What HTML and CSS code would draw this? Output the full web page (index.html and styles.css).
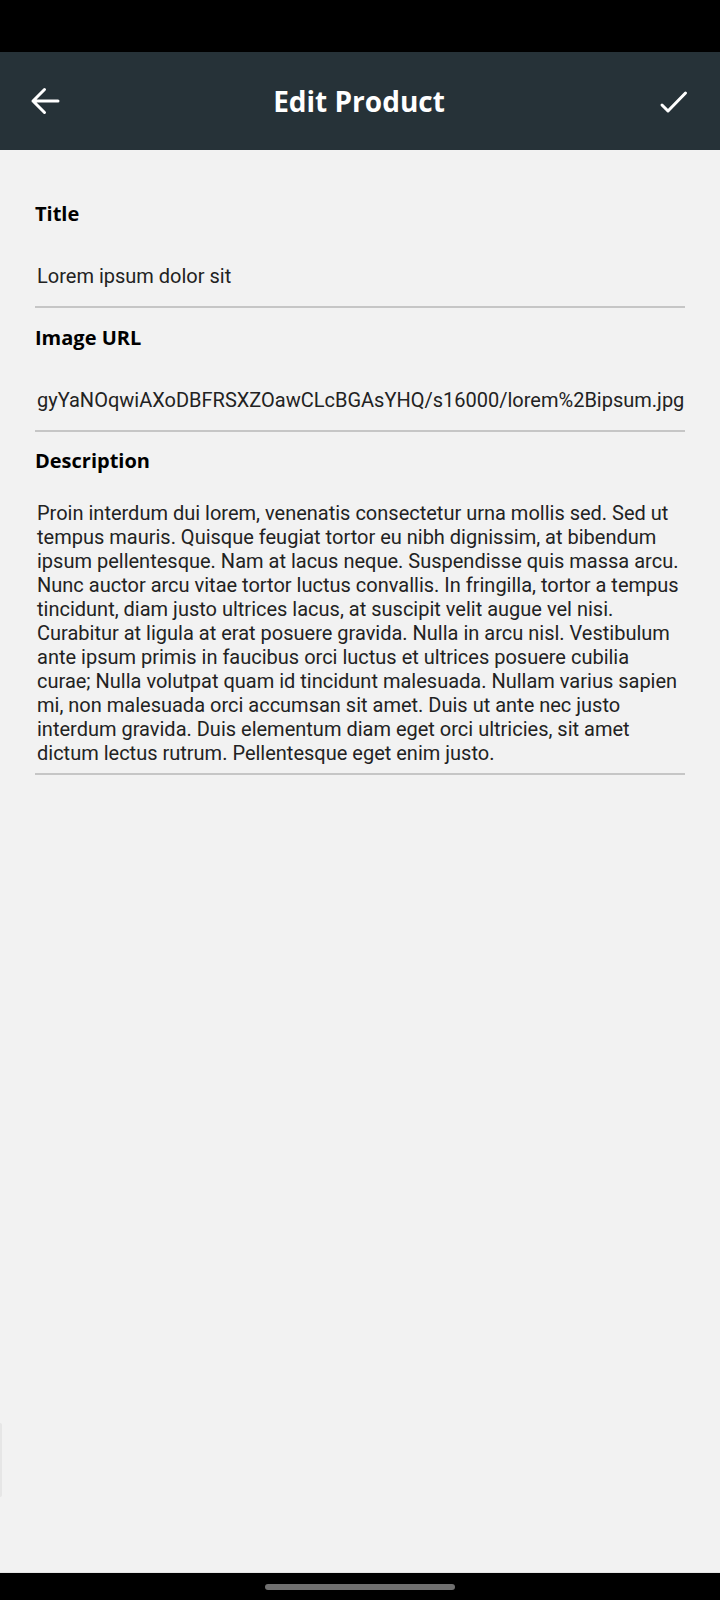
FILE: index.html
```html
<!DOCTYPE html>
<html lang="en">
<head>
<meta charset="utf-8">
<title>Edit Product</title>
<link rel="stylesheet" href="styles.css">
</head>
<body>
  <div class="status-bar"></div>
  <header class="toolbar">
    <button class="icon-btn" aria-label="Back">
      <svg viewBox="0 0 42 42" width="42" height="42">
        <path d="M9 21 H34 M20.5 9.5 L9 21 L20.5 32.5" fill="none" stroke="#fff" stroke-width="3" stroke-linecap="round" stroke-linejoin="round"/>
      </svg>
    </button>
    <h1 class="toolbar-title">Edit Product</h1>
    <button class="icon-btn" aria-label="Save">
      <svg viewBox="0 0 42 42" width="42" height="42">
        <path d="M10 25 L16 31 L33.5 13" fill="none" stroke="#fff" stroke-width="3" stroke-linecap="round" stroke-linejoin="round"/>
      </svg>
    </button>
  </header>
  <main class="content">
    <div class="field">
      <div class="label">Title</div>
      <div class="input">Lorem ipsum dolor sit</div>
    </div>
    <div class="field">
      <div class="label">Image URL</div>
      <div class="input single">gyYaNOqwiAXoDBFRSXZOawCLcBGAsYHQ/s16000/lorem%2Bipsum.jpg</div>
    </div>
    <div class="field">
      <div class="label">Description</div>
      <div class="input multi">Proin interdum dui lorem, venenatis consectetur urna mollis sed. Sed ut<br>tempus mauris. Quisque feugiat tortor eu nibh dignissim, at bibendum<br>ipsum pellentesque. Nam at lacus neque. Suspendisse quis massa arcu.<br>Nunc auctor arcu vitae tortor luctus convallis. In fringilla, tortor a tempus<br>tincidunt, diam justo ultrices lacus, at suscipit velit augue vel nisi.<br>Curabitur at ligula at erat posuere gravida. Nulla in arcu nisl. Vestibulum<br>ante ipsum primis in faucibus orci luctus et ultrices posuere cubilia<br>curae; Nulla volutpat quam id tincidunt malesuada. Nullam varius sapien<br>mi, non malesuada orci accumsan sit amet. Duis ut ante nec justo<br>interdum gravida. Duis elementum diam eget orci ultricies, sit amet<br>dictum lectus rutrum. Pellentesque eget enim justo.</div>
    </div>
    <div class="edge-handle"></div>
  </main>
  <footer class="nav-bar">
    <div class="nav-pill"></div>
  </footer>
</body>
</html>
```
FILE: styles.css
```css
* { box-sizing: border-box; }

html, body {
  margin: 0;
  padding: 0;
}

body {
  width: 720px;
  height: 1600px;
  background: #f2f2f2;
  display: flex;
  flex-direction: column;
  font-family: Roboto, "Liberation Sans", sans-serif;
  overflow: hidden;
}

.status-bar {
  flex: none;
  height: 52px;
  background: #000;
}

.toolbar {
  flex: none;
  height: 98px;
  background: #263238;
  display: flex;
  align-items: center;
  padding: 0 26px 0 24px;
}

.icon-btn {
  flex: none;
  width: 42px;
  height: 42px;
  padding: 0;
  margin: 0;
  border: 0;
  background: transparent;
  display: block;
}

.icon-btn svg {
  display: block;
}

.toolbar-title {
  flex: 1;
  margin: 0;
  text-align: center;
  color: #fff;
  font-family: "Open Sans", "Liberation Sans", sans-serif;
  font-weight: 700;
  font-size: 28px;
  line-height: 38px;
}

.content {
  flex: 1;
  position: relative;
  padding: 50px 35px 0;
}

.field + .field {
  margin-top: 15.5px;
}

.label {
  font-family: "Open Sans", "Liberation Sans", sans-serif;
  font-weight: 700;
  font-size: 20px;
  line-height: 28px;
  color: #000;
}

.input {
  font-family: Roboto, "Liberation Sans", sans-serif;
  font-size: 20px;
  line-height: 24px;
  color: #222;
  padding: 36px 0 18px 2px;
  border-bottom: 2px solid #c6c6c6;
  white-space: nowrap;
  overflow: hidden;
}

.input.multi {
  padding: 26px 0 8px 2px;
}

.edge-handle {
  position: absolute;
  left: 0;
  top: 1273px;
  width: 2px;
  height: 74px;
  background: #e6e6e6;
  border-radius: 0 2px 2px 0;
}

.nav-bar {
  flex: none;
  height: 28px;
  background: #000;
  border-top: 1px solid #e4e4e4;
  display: flex;
  align-items: center;
  justify-content: center;
}

.nav-pill {
  width: 190px;
  height: 6px;
  border-radius: 3px;
  background: #707070;
  margin-top: 1px;
}
```
